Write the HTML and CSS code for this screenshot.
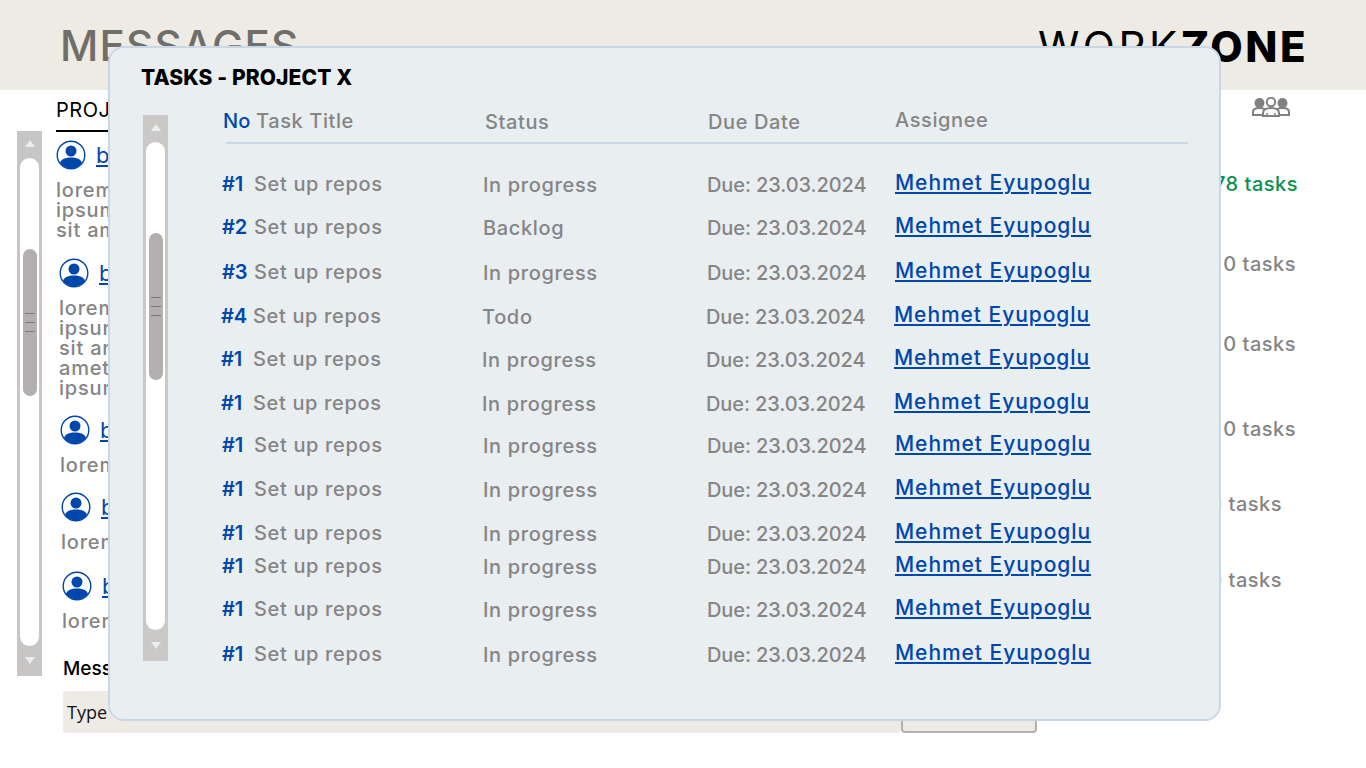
FILE: index.html
```html
<!DOCTYPE html>
<html lang="en">
<head>
    <meta charset="UTF-8">
    <title>Workzone - Messages</title>
    <link rel="stylesheet" href="styles.css">
</head>
<body>
<div class="page">
    <header class="topbar">
        <h1>MESSAGES</h1>
        <div class="logo"><span>WORK</span><b>ZONE</b></div>
    </header>

    <main class="content">
        <section class="left-panel">
            <div class="scrollbar">
                <div class="arrow-up"></div>
                <div class="track">
                    <div class="thumb"><i></i><i></i><i></i></div>
                </div>
                <div class="arrow-down"></div>
            </div>
            <div class="feed">
                <div class="tab">PROJECTS</div>
                <div class="msg msg-1">
                    <div class="msg-head">
                        <svg class="avatar" viewBox="0 0 30 30"><use href="#user"></use></svg>
                        <a href="#">bob</a>
                    </div>
                    <p>lorem<br>ipsum<br>sit amet</p>
                </div>
                <div class="msg msg-2">
                    <div class="msg-head">
                        <svg class="avatar" viewBox="0 0 30 30"><use href="#user"></use></svg>
                        <a href="#">bob</a>
                    </div>
                    <p>lorem<br>ipsum<br>sit amet<br>amet<br>ipsum</p>
                </div>
                <div class="msg msg-3">
                    <div class="msg-head">
                        <svg class="avatar" viewBox="0 0 30 30"><use href="#user"></use></svg>
                        <a href="#">bob</a>
                    </div>
                    <p>lorem</p>
                </div>
                <div class="msg msg-4">
                    <div class="msg-head">
                        <svg class="avatar" viewBox="0 0 30 30"><use href="#user"></use></svg>
                        <a href="#">bob</a>
                    </div>
                    <p>lorem</p>
                </div>
                <div class="msg msg-5">
                    <div class="msg-head">
                        <svg class="avatar" viewBox="0 0 30 30"><use href="#user"></use></svg>
                        <a href="#">bob</a>
                    </div>
                    <p>lorem</p>
                </div>
                <div class="composer">
                    <label>Message</label>
                    <div class="composer-row">
                        <div class="composer-input">Type</div>
                        <button class="composer-send"></button>
                    </div>
                </div>
            </div>
        </section>

        <aside class="right-panel">
            <svg class="people" viewBox="0 0 38 20">
                <g fill="#fff" stroke="#808080" stroke-width="2">
                    <path d="M1 18v-3c0-2.500 2.500-4 6.500-4s6.500 1.500 6.500 4v3z"></path>
                    <path d="M24 18v-3c0-2.500 2.500-4 6.500-4s6.500 1.500 6.500 4v3z"></path>
                </g>
                <g fill="#808080">
                    <circle cx="7.500" cy="6" r="5"></circle>
                    <circle cx="30.500" cy="6" r="5"></circle>
                </g>
                <g fill="#fff" stroke="#808080" stroke-width="2">
                    <circle cx="19" cy="5" r="4.200"></circle>
                    <path d="M11 19v-3c0-3 3-5 8-5s8 2 8 5v3z"></path>
                </g>
                <path d="M15 19v-3M23 19v-3" stroke="#808080" stroke-width="1.500"></path>
            </svg>
            <div class="counts">
                <div class="count count-done">78 tasks</div>
                <div class="count count-a">0 tasks</div>
                <div class="count count-a">0 tasks</div>
                <div class="count count-a">0 tasks</div>
                <div class="count count-b">0 tasks</div>
                <div class="count count-b">0 tasks</div>
            </div>
        </aside>
    </main>

    <div class="modal">
        <h2>TASKS - PROJECT X</h2>
        <div class="modal-body">
            <div class="scrollbar scrollbar-modal">
                <div class="arrow-up"></div>
                <div class="track">
                    <div class="thumb"><i></i><i></i><i></i></div>
                </div>
                <div class="arrow-down"></div>
            </div>
            <div class="tasks">
                <div class="tasks-head">
                    <span class="no">No</span>
                    <span>Task Title</span>
                    <span class="low">Status</span>
                    <span class="low">Due Date</span>
                    <span class="high">Assignee</span>
                </div>
                <div class="tasks-rows">
                    <div class="row"><b>#1</b><span>Set up repos</span><em>In progress</em><em class="due">Due: 23.03.2024</em><a href="#">Mehmet Eyupoglu</a></div>
                    <div class="row"><b>#2</b><span>Set up repos</span><em>Backlog</em><em class="due">Due: 23.03.2024</em><a href="#">Mehmet Eyupoglu</a></div>
                    <div class="row"><b>#3</b><span>Set up repos</span><em>In progress</em><em class="due">Due: 23.03.2024</em><a href="#">Mehmet Eyupoglu</a></div>
                    <div class="row shift"><b>#4</b><span>Set up repos</span><em>Todo</em><em class="due">Due: 23.03.2024</em><a href="#">Mehmet Eyupoglu</a></div>
                    <div class="row shift"><b>#1</b><span>Set up repos</span><em>In progress</em><em class="due">Due: 23.03.2024</em><a href="#">Mehmet Eyupoglu</a></div>
                    <div class="row shift"><b>#1</b><span>Set up repos</span><em>In progress</em><em class="due">Due: 23.03.2024</em><a href="#">Mehmet Eyupoglu</a></div>
                    <div class="row"><b>#1</b><span>Set up repos</span><em>In progress</em><em class="due">Due: 23.03.2024</em><a href="#">Mehmet Eyupoglu</a></div>
                    <div class="row"><b>#1</b><span>Set up repos</span><em>In progress</em><em class="due">Due: 23.03.2024</em><a href="#">Mehmet Eyupoglu</a></div>
                    <div class="row"><b>#1</b><span>Set up repos</span><em>In progress</em><em class="due">Due: 23.03.2024</em><a href="#">Mehmet Eyupoglu</a></div>
                    <div class="row"><b>#1</b><span>Set up repos</span><em>In progress</em><em class="due">Due: 23.03.2024</em><a href="#">Mehmet Eyupoglu</a></div>
                    <div class="row"><b>#1</b><span>Set up repos</span><em>In progress</em><em class="due">Due: 23.03.2024</em><a href="#">Mehmet Eyupoglu</a></div>
                    <div class="row"><b>#1</b><span>Set up repos</span><em>In progress</em><em class="due">Due: 23.03.2024</em><a href="#">Mehmet Eyupoglu</a></div>
                </div>
            </div>
        </div>
    </div>
</div>

<svg class="defs" width="0" height="0">
    <defs>
        <clipPath id="user-clip"><circle cx="15" cy="15" r="13.500"></circle></clipPath>
        <g id="user">
            <circle cx="15" cy="15" r="13.800" fill="#fff" stroke="#0047ab" stroke-width="1.400"></circle>
            <circle cx="15" cy="11" r="5.500" fill="#0047ab"></circle>
            <path d="M4 30v-6c0-4 4-6.500 11-6.500s11 2.500 11 6.500v6z" fill="#0047ab" clip-path="url(#user-clip)"></path>
        </g>
    </defs>
</svg>
</body>
</html>
```

FILE: styles.css
```css
body {
    margin: 0;
    background: #fff;
    font-family: Inter, "Open Sans", sans-serif;
    color: #858585;
}

a {
    color: #0047ab;
}

.page {
    position: relative;
    width: 1366px;
    height: 768px;
    overflow: hidden;
}

.defs {
    position: absolute;
}

/* header */
.topbar {
    height: 90px;
    box-sizing: border-box;
    padding: 20px 58px 0 60px;
    background: #eeebe4;
    display: flex;
    justify-content: space-between;
}

.topbar h1 {
    margin: 0;
    font-size: 42px;
    line-height: 52px;
    font-weight: 500;
    letter-spacing: 1.2px;
    color: #6f6e69;
}

.logo {
    font-size: 42px;
    line-height: 54px;
    font-weight: 400;
    letter-spacing: 3.5px;
    color: #000;
}

.logo b {
    font-weight: 800;
    letter-spacing: 2.5px;
}

/* page behind the modal */
.content {
    display: flex;
    justify-content: space-between;
}

.left-panel {
    display: flex;
    gap: 14px;
    padding-left: 17px;
}

.scrollbar {
    width: 25px;
    height: 545px;
    margin-top: 41px;
    background: #c8c5c5;
    display: flex;
    flex-direction: column;
    align-items: center;
}

.arrow-up,
.arrow-down {
    width: 0;
    height: 0;
    border-left: 5px solid transparent;
    border-right: 5px solid transparent;
}

.arrow-up {
    margin: 9px 0 11px;
    border-bottom: 7px solid #eeeded;
}

.arrow-down {
    margin: 11px 0 0;
    border-top: 7px solid #eeeded;
}

.track {
    width: 19px;
    height: 488px;
    padding-top: 91px;
    box-sizing: border-box;
    background: #fff;
    border-radius: 10px;
    display: flex;
    justify-content: center;
    align-items: flex-start;
}

.thumb {
    width: 14px;
    height: 147px;
    background: #b3afae;
    border-radius: 8px;
    display: flex;
    flex-direction: column;
    align-items: center;
    justify-content: center;
    gap: 8px;
}

.thumb i {
    width: 10px;
    height: 1px;
    background: #7c7877;
}

.feed {
    width: 1000px;
}

.tab {
    width: 240px;
    height: 42px;
    box-sizing: border-box;
    padding-top: 8px;
    border-bottom: 2px solid #000;
    color: #000;
    font-size: 20px;
    line-height: 24px;
    letter-spacing: .5px;
    white-space: nowrap;
}

.msg p {
    margin: 10px 0 0;
    font-size: 20px;
    line-height: 20px;
    letter-spacing: .8px;
    font-weight: 500;
}

.msg-head {
    display: flex;
    align-items: center;
    gap: 10px;
    font-size: 22px;
}

.avatar {
    width: 30px;
    height: 30px;
}

.msg-1 { margin-top: 8px; }
.msg-2 { margin: 18px 0 0 3px; }
.msg-3 { margin: 17px 0 0 4px; }
.msg-4 { margin: 17px 0 0 5px; }
.msg-5 { margin: 19px 0 0 6px; }

.composer {
    margin: 26px 0 0 7px;
}

.composer label {
    display: block;
    color: #000;
    font-size: 19px;
    line-height: 24px;
    font-weight: 500;
}

.composer-row {
    display: flex;
    align-items: flex-end;
    width: 974px;
    margin-top: 10px;
}

.composer-input {
    flex: 1;
    height: 42px;
    box-sizing: border-box;
    padding: 9px 4px;
    background: #eeebe4;
    border-radius: 3px;
    font-family: "Open Sans", sans-serif;
    font-size: 18px;
    line-height: 24px;
    color: #111;
}

.composer-send {
    width: 136px;
    height: 30px;
    box-sizing: border-box;
    border: 2px solid #b5b0ae;
    border-radius: 4px;
    background: #eeebe4;
}

.right-panel {
    width: 144px;
    box-sizing: border-box;
    padding-top: 7px;
    position: relative;
}

.people {
    display: block;
    width: 38px;
    height: 20px;
    margin-left: 30px;
}

.counts {
    display: grid;
    grid-template-columns: 144px;
    grid-template-rows: 80px 80px 85px 75px 76px 40px;
    margin-top: 54px;
}

.count {
    display: flex;
    justify-content: flex-end;
    align-items: center;
    height: 26px;
    font-size: 20px;
    letter-spacing: .5px;
    font-weight: 500;
    white-space: nowrap;
}

.count-done { color: #0a9150; padding-right: 68px; }
.count-a { padding-right: 70px; }
.count-b { padding-right: 84px; }

/* modal */
.modal {
    position: absolute;
    left: 108px;
    top: 46px;
    width: 1113px;
    height: 675px;
    box-sizing: border-box;
    background: #e9eef1;
    border: 2px solid #c9d8e8;
    border-radius: 16px;
}

.modal h2 {
    margin: 0;
    padding: 18px 0 0 31px;
    font-size: 21px;
    line-height: 24px;
    font-weight: 800;
    letter-spacing: .1px;
    color: #000;
}

.modal-body {
    display: flex;
    padding-left: 33px;
}

.scrollbar-modal {
    height: 546px;
    margin-top: 25px;
    background: #cbc8c8;
}

.scrollbar-modal .arrow-down {
    margin-top: 12px;
}

.tasks {
    margin-left: 54px;
    width: 966px;
}

.tasks-head {
    display: grid;
    grid-template-columns: 30px 229px 223px 187px 1fr;
    height: 34px;
    margin: 18px 0 0 4px;
    border-bottom: 2px solid #c9d8e8;
    font-size: 20px;
    line-height: 26px;
    font-weight: 500;
    letter-spacing: .6px;
}

.tasks-head .no {
    margin-left: -3px;
    color: #0047ab;
    letter-spacing: 0;
}

.tasks-head .low {
    margin-top: 1px;
}

.tasks-head .high {
    margin-top: -1px;
}

.tasks-rows {
    display: grid;
    grid-template-rows: 43px 45px 44px 43px 44px 42px 44px 44px 33px 43px 45px 30px;
    margin-top: 26px;
}

.row {
    display: grid;
    grid-template-columns: 32px 229px 224px 188px 1fr;
    height: 28px;
    font-size: 20px;
    line-height: 28px;
    white-space: nowrap;
    font-weight: 500;
}

.row.shift {
    margin-left: -1px;
}

.row b {
    color: #0047ab;
    font-weight: 600;
}

.row span,
.row em {
    letter-spacing: .65px;
    font-style: normal;
}

.row em {
    margin-top: 1px;
}

.row .due {
    letter-spacing: -.1px;
}

.row a {
    margin-top: -1px;
    font-size: 21px;
    letter-spacing: .95px;
}
```
